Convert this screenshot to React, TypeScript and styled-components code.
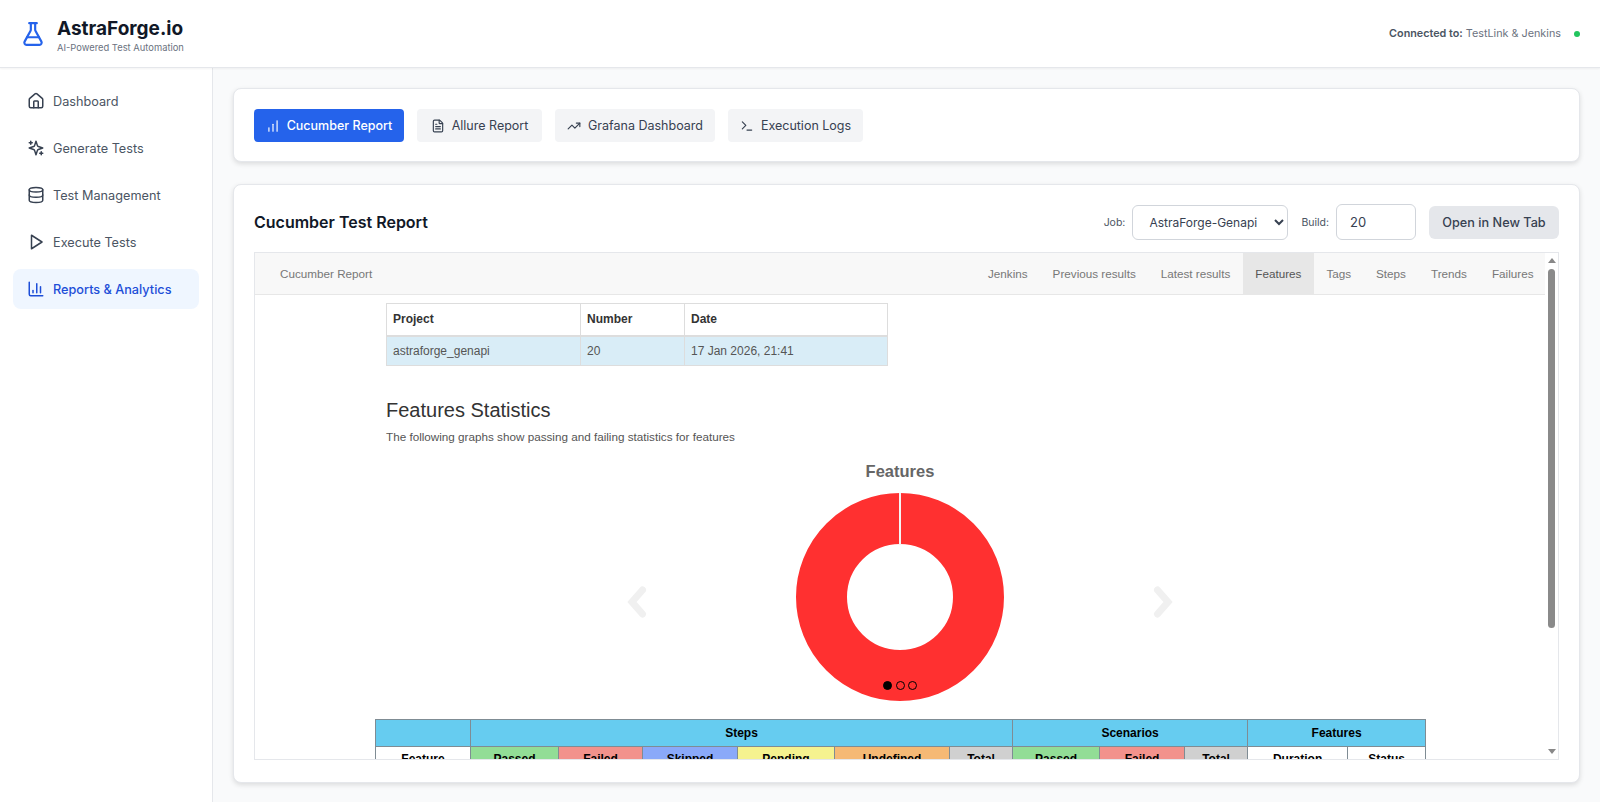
import React from "react";
import styled, { createGlobalStyle } from "styled-components";
import {
  ChartColumn,
  ChartNoAxesColumnIncreasing,
  Database,
  FileText,
  FlaskConical,
  House,
  Terminal,
  TrendingUp,
} from "lucide-react";

const GlobalStyle = createGlobalStyle`
  * { box-sizing: border-box; }
  html, body { margin: 0; height: 100%; }
  body {
    font-family: Inter, "Noto Sans", sans-serif;
    background: #f9fafb;
    color: #111827;
  }
`;

type IconProps = { size?: number; strokeWidth?: number };

const SparklesIcon = ({ size = 18, strokeWidth = 2 }: IconProps) => (
  <svg width={size} height={size} viewBox="0 0 24 24" fill="none" stroke="currentColor" strokeWidth={strokeWidth} strokeLinecap="round" strokeLinejoin="round">
    <path d="m12 3-1.912 5.813a2 2 0 0 1-1.275 1.275L3 12l5.813 1.912a2 2 0 0 1 1.275 1.275L12 21l1.912-5.813a2 2 0 0 1 1.275-1.275L21 12l-5.813-1.912a2 2 0 0 1-1.275-1.275L12 3Z" />
    <path d="M5 3v4M19 17v4M3 5h4M17 19h4" />
  </svg>
);

const PlayIcon = ({ size = 18, strokeWidth = 2 }: IconProps) => (
  <svg width={size} height={size} viewBox="0 0 24 24" fill="none" stroke="currentColor" strokeWidth={strokeWidth} strokeLinecap="round" strokeLinejoin="round">
    <polygon points="6 3 20 12 6 21 6 3" />
  </svg>
);

const navItems = [
  { label: "Dashboard", icon: House },
  { label: "Generate Tests", icon: SparklesIcon },
  { label: "Test Management", icon: Database },
  { label: "Execute Tests", icon: PlayIcon },
  { label: "Reports & Analytics", icon: ChartColumn, active: true },
];

const reportTabs = [
  { label: "Cucumber Report", icon: ChartNoAxesColumnIncreasing, active: true, width: 150 },
  { label: "Allure Report", icon: FileText, width: 125 },
  { label: "Grafana Dashboard", icon: TrendingUp, width: 160 },
  { label: "Execution Logs", icon: Terminal, width: 135 },
];

const frameLinks = ["Jenkins", "Previous results", "Latest results", "Features", "Tags", "Steps", "Trends", "Failures"];

const subHeaders = [
  { label: "Feature", bg: "#fff", width: 95 },
  { label: "Passed", bg: "#92dd96", width: 88 },
  { label: "Failed", bg: "#f2928c", width: 84 },
  { label: "Skipped", bg: "#8aa9f9", width: 95 },
  { label: "Pending", bg: "#f5f28f", width: 97 },
  { label: "Undefined", bg: "#f5b975", width: 115 },
  { label: "Total", bg: "#d0d0d0", width: 63 },
  { label: "Passed", bg: "#92dd96", width: 87 },
  { label: "Failed", bg: "#f2928c", width: 85 },
  { label: "Total", bg: "#d0d0d0", width: 63 },
  { label: "Duration", bg: "#fff", width: 100 },
  { label: "Status", bg: "#fff", width: 78 },
];

export default function App() {
  return (
    <Page>
      <GlobalStyle />
      <Header>
        <Brand>
          <FlaskConical size={26} color="#2563eb" strokeWidth={2} />
          <BrandText>
            <BrandName>AstraForge.io</BrandName>
            <BrandSub>AI-Powered Test Automation</BrandSub>
          </BrandText>
        </Brand>
        <Status>
          <span>
            <b>Connected to:</b> TestLink &amp; Jenkins
          </span>
          <Dot />
        </Status>
      </Header>
      <Body>
        <Sidebar>
          {navItems.map((item) => (
            <NavItem key={item.label} $active={item.active}>
              <item.icon size={18} strokeWidth={2} />
              {item.label}
            </NavItem>
          ))}
        </Sidebar>
        <Main>
          <TabsCard>
            {reportTabs.map((tab) => (
              <TabButton key={tab.label} $active={tab.active} $width={tab.width}>
                <tab.icon size={14} strokeWidth={2} />
                {tab.label}
              </TabButton>
            ))}
          </TabsCard>
          <ReportCard>
            <ReportHead>
              <ReportTitle>Cucumber Test Report</ReportTitle>
              <Controls>
                <ControlLabel>Job:</ControlLabel>
                <JobSelect defaultValue="AstraForge-Genapi">
                  <option>AstraForge-Genapi</option>
                </JobSelect>
                <ControlLabel>Build:</ControlLabel>
                <BuildInput defaultValue="20" />
                <OpenButton>Open in New Tab</OpenButton>
              </Controls>
            </ReportHead>
            <Frame>
              <FrameMain>
                <FrameNav>
                  <FrameBrand>Cucumber Report</FrameBrand>
                  <FrameLinks>
                    {frameLinks.map((link) => (
                      <FrameLink key={link} $active={link === "Features"}>
                        {link}
                      </FrameLink>
                    ))}
                  </FrameLinks>
                </FrameNav>
                <FrameContent>
                  <InfoTable>
                    <colgroup>
                      <col width={194} />
                      <col width={104} />
                      <col />
                    </colgroup>
                    <thead>
                      <tr>
                        <th>Project</th>
                        <th>Number</th>
                        <th>Date</th>
                      </tr>
                    </thead>
                    <tbody>
                      <tr>
                        <td>astraforge_genapi</td>
                        <td>20</td>
                        <td>17 Jan 2026, 21:41</td>
                      </tr>
                    </tbody>
                  </InfoTable>
                  <StatsTitle>Features Statistics</StatsTitle>
                  <StatsText>The following graphs show passing and failing statistics for features</StatsText>
                  <ChartTitle>Features</ChartTitle>
                  <Carousel>
                    <Chevron viewBox="0 0 20 32">
                      <path d="M15.5 4 L5 16 L15.5 28" />
                    </Chevron>
                    <DonutWrap>
                      <svg width="208" height="208" viewBox="0 0 208 208">
                        <circle cx="104" cy="104" r="78.5" fill="none" stroke="#ff3030" strokeWidth="51" />
                        <rect x="103" y="0" width="2" height="52" fill="#f4f4f4" />
                      </svg>
                      <Dots>
                        <CarouselDot $active />
                        <CarouselDot />
                        <CarouselDot />
                      </Dots>
                    </DonutWrap>
                    <Chevron viewBox="0 0 20 32">
                      <path d="M4.5 4 L15 16 L4.5 28" />
                    </Chevron>
                  </Carousel>
                  <StatsTable>
                    <colgroup>
                      {subHeaders.map((h, i) => (
                        <col key={i} width={h.width} />
                      ))}
                    </colgroup>
                    <thead>
                      <tr>
                        <GroupCell />
                        <GroupCell colSpan={6}>Steps</GroupCell>
                        <GroupCell colSpan={3}>Scenarios</GroupCell>
                        <GroupCell colSpan={2}>Features</GroupCell>
                      </tr>
                      <tr>
                        {subHeaders.map((h, i) => (
                          <SubCell key={i} $bg={h.bg}>
                            {h.label}
                          </SubCell>
                        ))}
                      </tr>
                    </thead>
                  </StatsTable>
                </FrameContent>
              </FrameMain>
              <Scrollbar>
                <ScrollArrow />
                <ScrollThumb />
                <ScrollArrow $down />
              </Scrollbar>
            </Frame>
          </ReportCard>
        </Main>
      </Body>
    </Page>
  );
}

const Page = styled.div`
  height: 802px;
  display: flex;
  flex-direction: column;
  overflow: hidden;
`;

const Header = styled.header`
  height: 68px;
  flex: none;
  background: #fff;
  border-bottom: 1px solid #e5e7eb;
  box-shadow: 0 1px 2px rgba(0, 0, 0, 0.05);
  display: flex;
  align-items: center;
  justify-content: space-between;
  padding: 0 20px;
  position: relative;
`;

const Brand = styled.div`
  display: flex;
  align-items: center;
  gap: 11px;
`;

const BrandText = styled.div`
  margin-top: 4px;
`;

const BrandName = styled.div`
  font-size: 19px;
  line-height: 24px;
  font-weight: 700;
  color: #111827;
`;

const BrandSub = styled.div`
  font-size: 9.4px;
  line-height: 13px;
  color: #6b7280;
`;

const Status = styled.div`
  display: flex;
  align-items: center;
  gap: 13px;
  font-size: 10.8px;
  color: #6b7280;

  b {
    font-weight: 600;
    color: #4b5563;
  }
`;

const Dot = styled.span`
  width: 6px;
  height: 6px;
  border-radius: 50%;
  background: #22c55e;
`;

const Body = styled.div`
  flex: 1;
  display: flex;
  min-height: 0;
`;

const Sidebar = styled.aside`
  width: 213px;
  flex: none;
  background: #fff;
  border-right: 1px solid #e5e7eb;
  padding: 13px 13px;
  display: flex;
  flex-direction: column;
  gap: 7px;
`;

const NavItem = styled.div<{ $active?: boolean }>`
  height: 40px;
  display: flex;
  align-items: center;
  gap: 8px;
  padding: 0 14px;
  border-radius: 8px;
  font-size: 12.7px;
  font-weight: ${(p) => (p.$active ? 500 : 400)};
  color: ${(p) => (p.$active ? "#1d4ed8" : "#4b5563")};
  background: ${(p) => (p.$active ? "#eff6ff" : "transparent")};

  svg {
    color: ${(p) => (p.$active ? "#1d4ed8" : "#374151")};
  }
`;

const Main = styled.main`
  flex: 1;
  min-width: 0;
  padding: 20px 20px 19px 20px;
  display: flex;
  flex-direction: column;
  gap: 22px;
`;

const TabsCard = styled.section`
  flex: none;
  height: 74px;
  background: #fff;
  border: 1px solid #e5e7eb;
  border-radius: 8px;
  box-shadow: 0 2px 5px rgba(0, 0, 0, 0.12);
  display: flex;
  align-items: center;
  gap: 13px;
  padding: 0 20px;
`;

const TabButton = styled.button<{ $active?: boolean; $width: number }>`
  width: ${(p) => p.$width}px;
  height: 33px;
  padding: 1px 0 0;
  border: 0;
  border-radius: 4px;
  display: flex;
  align-items: center;
  justify-content: center;
  gap: 7px;
  font-family: inherit;
  font-size: 12.5px;
  font-weight: ${(p) => (p.$active ? 500 : 400)};
  color: ${(p) => (p.$active ? "#fff" : "#374151")};
  background: ${(p) => (p.$active ? "#2563eb" : "#f3f4f6")};
`;

const ReportCard = styled.section`
  flex: 1;
  min-height: 0;
  background: #fff;
  border: 1px solid #e5e7eb;
  border-radius: 8px;
  box-shadow: 0 2px 5px rgba(0, 0, 0, 0.12);
  padding: 19px 20px 22px;
  display: flex;
  flex-direction: column;
  gap: 12px;
`;

const ReportHead = styled.div`
  flex: none;
  height: 36px;
  display: flex;
  align-items: center;
  justify-content: space-between;
`;

const ReportTitle = styled.h2`
  margin: 0;
  font-size: 16px;
  font-weight: 600;
  color: #111827;
`;

const Controls = styled.div`
  display: flex;
  align-items: center;
`;

const ControlLabel = styled.label`
  font-size: 10.5px;
  color: #4b5563;
  margin-right: 7px;
`;

const JobSelect = styled.select`
  width: 156px;
  height: 35px;
  border: 1px solid #d1d5db;
  border-radius: 6px;
  background: #fff;
  padding: 0 12px;
  margin-right: 13px;
  font-family: inherit;
  font-size: 12px;
  color: #374151;
`;

const BuildInput = styled.input`
  width: 80px;
  height: 36px;
  border: 1px solid #d1d5db;
  border-radius: 6px;
  padding: 0 13px;
  margin-right: 13px;
  font-family: inherit;
  font-size: 13px;
  color: #374151;
`;

const OpenButton = styled.button`
  width: 130px;
  height: 33px;
  padding: 0;
  border: 0;
  border-radius: 6px;
  background: #e5e7eb;
  font-family: inherit;
  font-size: 12.7px;
  font-weight: 500;
  color: #374151;
`;

const Frame = styled.div`
  flex: 1;
  min-height: 0;
  border: 1px solid #e5e7eb;
  display: flex;
  overflow: hidden;
  font-family: "Liberation Sans", Arial, sans-serif;
`;

const FrameMain = styled.div`
  flex: 1;
  min-width: 0;
  display: flex;
  flex-direction: column;
`;

const FrameNav = styled.nav`
  flex: none;
  height: 42px;
  background: #f8f8f8;
  border-bottom: 1px solid #e7e7e7;
  display: flex;
  align-items: center;
  justify-content: space-between;
  padding-left: 25px;
`;

const FrameBrand = styled.span`
  font-size: 11.7px;
  color: #777;
`;

const FrameLinks = styled.div`
  display: flex;
  align-self: stretch;
  margin-right: -1px;
`;

const FrameLink = styled.span<{ $active?: boolean }>`
  display: flex;
  align-items: center;
  padding: 0 12.5px;
  font-size: 11.7px;
  color: ${(p) => (p.$active ? "#555" : "#777")};
  background: ${(p) => (p.$active ? "#e7e7e7" : "transparent")};
`;

const FrameContent = styled.div`
  flex: 1;
  min-height: 0;
  width: 1050px;
  margin: 0 auto;
  padding: 8px 0 0;
  color: #333;
`;

const InfoTable = styled.table`
  width: 502px;
  margin-left: 11px;
  border-collapse: collapse;
  table-layout: fixed;
  font-size: 12px;

  th,
  td {
    border: 1px solid #ddd;
    padding: 0 6px;
    text-align: left;
    color: #333;
  }

  thead th {
    border-bottom-width: 2px;
    height: 32px;
  }

  tbody td {
    height: 30px;
    background: #d9edf7;
    color: #555;
  }
`;

const StatsTitle = styled.h3`
  margin: 32px 0 0 11px;
  font-size: 20px;
  line-height: 24px;
  font-weight: 400;
  color: #333;
`;

const StatsText = styled.p`
  margin: 8px 0 0 11px;
  font-size: 11.7px;
  line-height: 14px;
  color: #555;
`;

const ChartTitle = styled.div`
  margin-top: 17px;
  text-align: center;
  font-size: 16.5px;
  line-height: 20px;
  font-weight: 700;
  color: #666;
`;

const Carousel = styled.div`
  margin-top: 12px;
  display: flex;
  align-items: center;
  justify-content: center;
  gap: 149px;
`;

const Chevron = styled.svg`
  width: 20px;
  height: 32px;
  flex: none;
  margin-top: 9px;

  path {
    fill: none;
    stroke: #f0f0f0;
    stroke-width: 7;
    stroke-linejoin: miter;
    stroke-linecap: round;
  }
`;

const DonutWrap = styled.div`
  position: relative;
  width: 208px;
  height: 208px;

  svg {
    display: block;
  }
`;

const Dots = styled.div`
  position: absolute;
  left: 0;
  right: 0;
  bottom: 11px;
  display: flex;
  justify-content: center;
  gap: 3.5px;
`;

const CarouselDot = styled.span<{ $active?: boolean }>`
  width: 9px;
  height: 9px;
  border-radius: 50%;
  border: 1px solid #000;
  background: ${(p) => (p.$active ? "#000" : "transparent")};
`;

const StatsTable = styled.table`
  width: 1050px;
  margin-top: 18px;
  border-collapse: collapse;
  table-layout: fixed;
  font-size: 12px;
  color: #000;
  text-align: center;

  th {
    border: 1px solid #7f8c94;
    font-weight: 400;
  }
`;

const GroupCell = styled.th`
  height: 27px;
  background: #66ccf0;
  font-weight: 700 !important;
`;

const SubCell = styled.th<{ $bg: string }>`
  height: 25px;
  background: ${(p) => p.$bg};
  font-weight: 700 !important;
`;

const Scrollbar = styled.div`
  width: 13px;
  flex: none;
  background: #fff;
  display: flex;
  flex-direction: column;
  align-items: center;
  padding: 5px 0;
`;

const ScrollArrow = styled.span<{ $down?: boolean }>`
  width: 0;
  height: 0;
  flex: none;
  border-left: 4px solid transparent;
  border-right: 4px solid transparent;
  border-${(p) => (p.$down ? "top" : "bottom")}: 5px solid #888;
  margin-top: ${(p) => (p.$down ? "auto" : "0")};
`;

const ScrollThumb = styled.span`
  width: 7px;
  height: 359px;
  margin-top: 6px;
  border-radius: 4px;
  background: #8a8a8a;
`;
